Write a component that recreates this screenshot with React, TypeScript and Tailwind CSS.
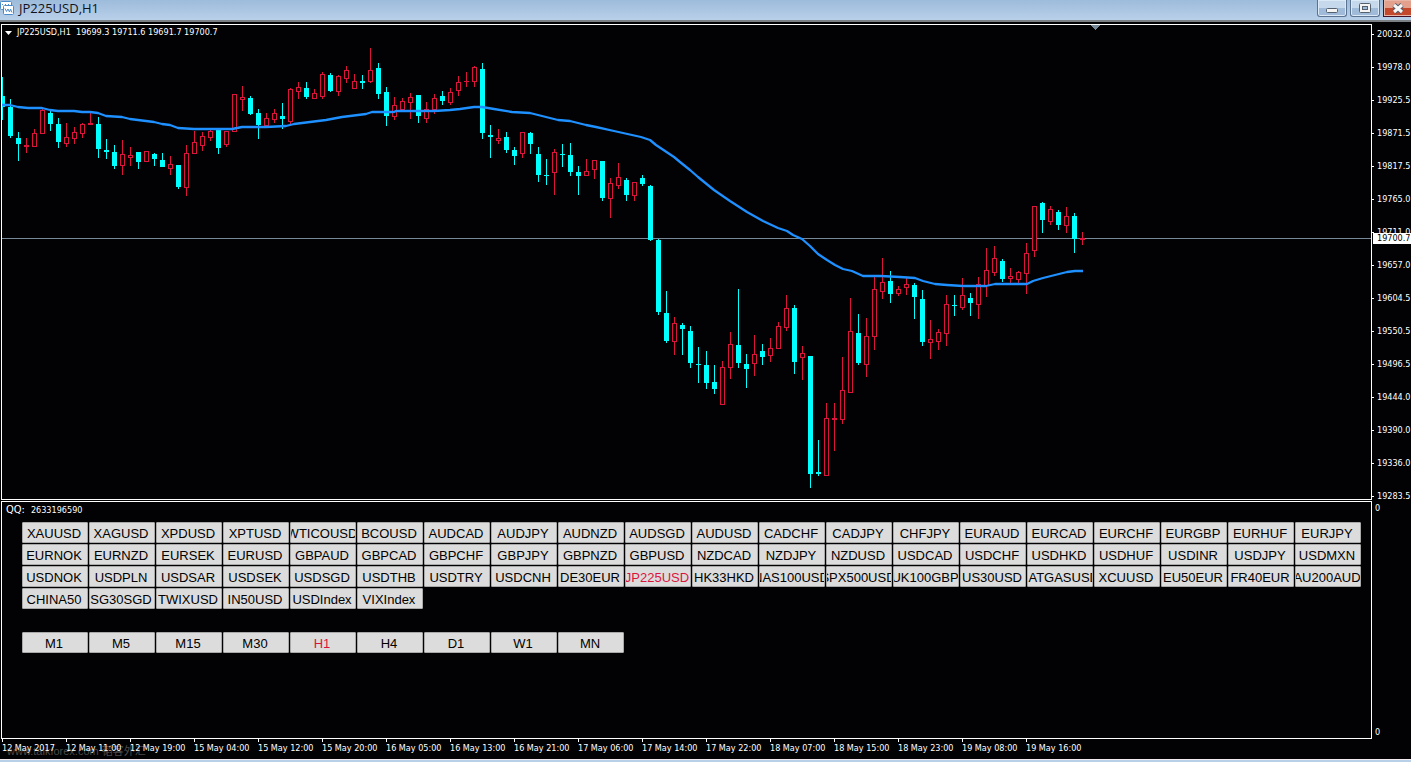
import { clsx } from 'clsx';

// [high, bodyTop, bodyBottom, low, direction] in chart pixels, one candle every 8px
type Candle = [number, number, number, number, 'u' | 'd'];

const candles: Candle[] = [
  [77, 96, 107, 120, 'd'], [99, 107, 136, 138, 'd'], [132, 138, 144, 161, 'd'], [138, 145, 147, 153, 'u'],
  [129, 133, 147, 147, 'u'], [108, 110, 134, 134, 'u'], [109, 113, 124, 131, 'd'], [118, 124, 142, 148, 'd'],
  [123, 137, 144, 147, 'u'], [127, 132, 139, 144, 'u'], [123, 124, 134, 138, 'u'], [112, 123, 125, 125, 'u'],
  [117, 124, 149, 158, 'd'], [139, 150, 152, 159, 'd'], [145, 152, 166, 169, 'd'], [140, 154, 166, 175, 'u'],
  [147, 155, 158, 166, 'u'], [152, 152, 162, 169, 'd'], [151, 151, 162, 162, 'u'], [153, 154, 159, 166, 'd'],
  [153, 160, 167, 167, 'd'], [156, 164, 169, 175, 'u'], [165, 165, 187, 189, 'd'], [145, 153, 188, 196, 'u'],
  [131, 142, 154, 154, 'u'], [132, 136, 146, 151, 'u'], [130, 131, 138, 141, 'u'], [129, 129, 148, 154, 'd'],
  [131, 131, 145, 147, 'u'], [94, 94, 132, 132, 'u'], [86, 97, 100, 111, 'u'], [96, 98, 114, 115, 'd'],
  [109, 113, 125, 139, 'd'], [113, 118, 126, 126, 'u'], [109, 113, 120, 123, 'u'], [103, 116, 119, 129, 'd'],
  [88, 89, 122, 124, 'u'], [82, 87, 92, 99, 'u'], [82, 88, 97, 99, 'd'], [89, 93, 99, 99, 'u'],
  [72, 74, 97, 99, 'u'], [73, 75, 91, 92, 'd'], [75, 76, 92, 96, 'u'], [66, 70, 79, 83, 'u'],
  [74, 81, 89, 89, 'u'], [75, 81, 83, 89, 'd'], [48, 70, 82, 83, 'u'], [63, 68, 94, 99, 'd'],
  [87, 92, 116, 126, 'd'], [97, 105, 117, 120, 'u'], [98, 101, 110, 110, 'u'], [93, 97, 103, 119, 'u'],
  [95, 95, 116, 123, 'd'], [102, 109, 119, 123, 'u'], [94, 98, 110, 114, 'u'], [91, 96, 101, 105, 'd'],
  [88, 92, 103, 105, 'u'], [76, 82, 91, 96, 'u'], [72, 81, 82, 87, 'u'], [66, 67, 82, 87, 'u'],
  [63, 69, 133, 139, 'd'], [125, 135, 137, 158, 'd'], [129, 138, 141, 144, 'u'], [132, 137, 150, 153, 'd'],
  [147, 150, 156, 165, 'd'], [132, 132, 154, 158, 'u'], [132, 133, 144, 154, 'd'], [147, 154, 175, 182, 'd'],
  [159, 175, 176, 185, 'd'], [149, 152, 173, 195, 'u'], [144, 154, 155, 167, 'd'], [143, 155, 172, 176, 'd'],
  [166, 172, 176, 195, 'd'], [159, 171, 176, 176, 'u'], [160, 160, 170, 179, 'u'], [161, 161, 198, 201, 'd'],
  [178, 183, 199, 218, 'u'], [163, 177, 186, 189, 'u'], [178, 180, 195, 201, 'd'], [182, 182, 196, 201, 'u'],
  [175, 178, 184, 186, 'd'], [185, 186, 240, 241, 'd'], [239, 240, 312, 315, 'd'], [291, 313, 341, 343, 'd'],
  [317, 323, 342, 355, 'u'], [323, 325, 329, 355, 'd'], [326, 331, 363, 368, 'd'], [347, 364, 365, 383, 'd'],
  [351, 365, 383, 389, 'd'], [365, 382, 389, 394, 'd'], [361, 367, 405, 405, 'u'], [332, 344, 368, 379, 'u'],
  [289, 345, 363, 368, 'd'], [354, 364, 369, 388, 'd'], [335, 354, 364, 376, 'u'], [344, 351, 357, 365, 'd'],
  [338, 348, 356, 362, 'u'], [322, 326, 349, 349, 'u'], [295, 308, 328, 331, 'u'], [305, 308, 362, 374, 'd'],
  [346, 353, 358, 380, 'u'], [356, 356, 474, 488, 'd'], [440, 472, 474, 476, 'd'], [403, 418, 476, 476, 'u'],
  [403, 418, 420, 451, 'u'], [357, 390, 420, 424, 'u'], [298, 331, 393, 393, 'u'], [314, 333, 363, 365, 'd'],
  [318, 336, 365, 377, 'u'], [277, 289, 337, 350, 'u'], [258, 282, 292, 299, 'u'], [271, 281, 294, 303, 'd'],
  [286, 289, 294, 296, 'u'], [278, 284, 288, 295, 'u'], [283, 285, 297, 319, 'd'], [290, 299, 342, 346, 'd'],
  [320, 339, 343, 359, 'u'], [329, 332, 342, 350, 'u'], [295, 304, 334, 346, 'u'], [295, 305, 306, 316, 'd'],
  [278, 295, 308, 310, 'u'], [293, 298, 303, 316, 'd'], [277, 284, 305, 319, 'u'], [248, 270, 286, 297, 'u'],
  [246, 258, 273, 276, 'u'], [259, 261, 279, 282, 'd'], [268, 276, 279, 283, 'u'], [271, 272, 280, 283, 'u'],
  [243, 253, 274, 294, 'u'], [206, 206, 251, 257, 'u'], [202, 203, 220, 233, 'd'], [206, 209, 222, 225, 'u'],
  [210, 212, 225, 230, 'd'], [207, 216, 226, 233, 'u'], [213, 216, 239, 253, 'd'], [232, 238, 240, 245, 'u'],
];

const average = [
  '2,105 10,105 18,107 28,108 42,108 50,110 58,111 74,111 82,112 90,112 98,113 106,116 122,117 130,119',
  '138,120 154,122 162,124 170,125 178,128 194,129 232,129 242,127 266,127 286,126 294,124 310,122 326,120',
  '342,117 358,115 366,114 372,112 394,112 396,111 434,111 450,110 460,109 474,107 482,107 494,109 512,112',
  '530,113 546,117 558,120 570,121 586,125 596,127 614,131 632,135 641,137 650,140 656,145 668,153 674,157',
  '680,162 690,170 698,177 714,190 730,201 747,212 763,221 778,228 787,231 793,235 802,239 810,246 818,254',
  '827,260 835,265 843,269 852,271 863,276 881,276 900,277 915,278 923,281 935,284 947,285 963,286 986,286',
  '995,284 1027,284 1033,281 1043,278 1055,275 1067,272 1075,271 1083,271',
].join(' ');

const prices = [
  '20032.0', '19978.0', '19925.5', '19871.5', '19817.5', '19765.0', '19711.0', '19657.0',
  '19604.5', '19550.5', '19496.5', '19444.0', '19390.0', '19336.0', '19283.5',
];

const times = [
  '12 May 2017', '12 May 11:00', '12 May 19:00', '15 May 04:00', '15 May 12:00', '15 May 20:00',
  '16 May 05:00', '16 May 13:00', '16 May 21:00', '17 May 06:00', '17 May 14:00', '17 May 22:00',
  '18 May 07:00', '18 May 15:00', '18 May 23:00', '19 May 08:00', '19 May 16:00',
];

const symbols = [
  'XAUUSD', 'XAGUSD', 'XPDUSD', 'XPTUSD', 'WTICOUSD', 'BCOUSD', 'AUDCAD', 'AUDJPY', 'AUDNZD', 'AUDSGD',
  'AUDUSD', 'CADCHF', 'CADJPY', 'CHFJPY', 'EURAUD', 'EURCAD', 'EURCHF', 'EURGBP', 'EURHUF', 'EURJPY',
  'EURNOK', 'EURNZD', 'EURSEK', 'EURUSD', 'GBPAUD', 'GBPCAD', 'GBPCHF', 'GBPJPY', 'GBPNZD', 'GBPUSD',
  'NZDCAD', 'NZDJPY', 'NZDUSD', 'USDCAD', 'USDCHF', 'USDHKD', 'USDHUF', 'USDINR', 'USDJPY', 'USDMXN',
  'USDNOK', 'USDPLN', 'USDSAR', 'USDSEK', 'USDSGD', 'USDTHB', 'USDTRY', 'USDCNH', 'DE30EUR', 'JP225USD',
  'HK33HKD', 'NAS100USD', 'SPX500USD', 'UK100GBP', 'US30USD', 'NATGASUSD', 'XCUUSD', 'EU50EUR', 'FR40EUR', 'AU200AUD',
  'CHINA50', 'SG30SGD', 'TWIXUSD', 'IN50USD', 'USDIndex', 'VIXIndex',
];

const periods = ['M1', 'M5', 'M15', 'M30', 'H1', 'H4', 'D1', 'W1', 'MN'];

function TitleBar() {
  const control =
    'flex h-[17px] w-[30px] items-center justify-center rounded-b-[3px] border border-t-0 border-[#5b7391] bg-linear-to-b from-[#c5d8ec] from-50% to-[#9fbbd9] to-50% shadow-[inset_0_0_0_1px_#dbe8f5]';
  return (
    <header className="flex h-[22px] items-start justify-between overflow-hidden border-b-2 border-[#7c8085] bg-linear-to-b from-[#9dbbdb] to-[#b9d0e9]">
      <div className="flex items-center gap-1">
        <svg width="15" height="16" viewBox="0 0 15 16" fill="#fff" stroke="#4b8cc8">
          <rect x="0.5" y="1.5" width="11" height="8" rx="1" />
          <path d="M2 4.5h1m2 0h1m2 0h1" fill="none" />
          <rect x="3.5" y="5.5" width="10" height="9" rx="1" />
          <path d="M5 8.500l1.500 3L8 9l1.500 3 1-3 1.500 3.500" fill="none" />
        </svg>
        <h1 className="font-['Open_Sans',sans-serif] text-[13px] leading-4 text-[#10131c]">JP225USD,H1</h1>
      </div>
      <div className="-mr-0.5 flex shrink-0 gap-[3px]">
        <button aria-label="Minimize" className={control}>
          <svg width="12" height="14" viewBox="0 0 12 14">
            <rect x="0.5" y="7.5" width="11" height="4" rx="1" fill="#f4f4f4" stroke="#55606e" />
          </svg>
        </button>
        <button aria-label="Restore" className={control}>
          <svg width="12" height="14" viewBox="0 0 12 14">
            <rect x="0.5" y="2.5" width="11" height="9" rx="1" fill="#f4f4f4" stroke="#55606e" />
            <rect x="3.5" y="5.5" width="5" height="3" fill="#9fbbd9" stroke="#55606e" />
          </svg>
        </button>
        <button
          aria-label="Close"
          className="flex h-[17px] w-[30px] items-center justify-center border border-t-0 border-[#43102a] bg-linear-to-b from-[#e3a18d] from-50% to-[#c4492c] to-50% shadow-[inset_0_0_0_1px_#e8b5a6]"
        >
          <svg width="12" height="14" viewBox="0 0 12 14" fill="none">
            <path d="M2 4l8 7M10 4l-8 7" stroke="#555b66" strokeWidth="5" />
            <path d="M2 4l8 7M10 4l-8 7" stroke="#f6f6f6" strokeWidth="3" />
          </svg>
        </button>
      </div>
    </header>
  );
}

function CandleMark({ x, candle }: { x: number; candle: Candle }) {
  const [high, top, bottom, low, dir] = candle;
  const height = bottom - top;
  const color = dir === 'u' ? '#dc143c' : '#00ffff';
  return (
    <g>
      <rect x={x} y={high} width={1} height={low - high} fill={color} />
      <rect x={x - 2} y={top} width={5} height={height} fill={color} />
      {dir === 'u' && height > 2 && <rect x={x - 1} y={top + 1} width={3} height={height - 2} fill="#020103" />}
    </g>
  );
}

function PriceChart() {
  return (
    <div className="relative min-w-0 flex-1 overflow-hidden border border-white">
      <svg className="block h-[474px] w-full" shapeRendering="crispEdges" role="img" aria-label="JP225USD H1 price">
        <rect x="0" y="213" width="100%" height="1" fill="#778899" />
        {/* chart data is kept in window coordinates */}
        <g transform="translate(-2 -25)">
          {candles.map((candle, i) => (
            <CandleMark key={i} x={2 + i * 8} candle={candle} />
          ))}
          <polyline
            points={average}
            fill="none"
            stroke="#1e90ff"
            strokeWidth="2.3"
            strokeLinejoin="round"
            shapeRendering="geometricPrecision"
          />
          <path d="M1091 25h9l-4.500 5z" fill="#778899" />
        </g>
      </svg>
      <p className="absolute top-0.5 left-[3px] flex items-center gap-[5px] leading-[11px] whitespace-pre">
        <svg width="7" height="4" viewBox="0 0 7 4" fill="#fff">
          <path d="M0 0h7L3.500 4z" />
        </svg>
        {'JP225USD,H1  19699.3 19711.6 19691.7 19700.7'}
      </p>
    </div>
  );
}

function PriceScale() {
  return (
    <div className="relative w-[39px] shrink-0">
      <ul className="flex flex-col gap-6 overflow-hidden pt-1.5 leading-[9px]">
        {prices.map((price) => (
          <li key={price} className="flex items-center gap-[3px]">
            <span className="h-px w-0.5 bg-white" />
            {price}
          </li>
        ))}
      </ul>
      <span className="absolute top-[209px] right-0 left-px bg-white pl-1 leading-[11px] text-black">19700.7</span>
    </div>
  );
}

function PanelButton({ label, active }: { label: string; active: boolean }) {
  return (
    <button
      className={clsx(
        'flex h-[21px] items-center justify-center overflow-hidden rounded-[1px] border border-[#a9a9a9] bg-[#dcdcdc] pt-0.5 pr-0.5 text-[13px]',
        active ? 'text-[#dc143c]' : 'text-black',
      )}
    >
      <span className="whitespace-nowrap">{label}</span>
    </button>
  );
}

function SymbolPanel() {
  const grid =
    "grid grid-cols-[repeat(20,minmax(0,1fr))] gap-px pr-2.5 pl-5 font-['Liberation_Sans',Arial,sans-serif]";
  return (
    <div className="min-w-0 flex-1 border border-white">
      <p className="flex h-5 items-start gap-1.5 pl-1 leading-4">
        <span className="text-[11px]">QQ:</span>2633196590
      </p>
      <div className={grid}>
        {symbols.map((symbol) => (
          <PanelButton key={symbol} label={symbol} active={symbol === 'JP225USD'} />
        ))}
      </div>
      <div className={clsx(grid, 'mt-[23px]')}>
        {periods.map((period) => (
          <PanelButton key={period} label={period} active={period === 'H1'} />
        ))}
      </div>
    </div>
  );
}

function TimeScale() {
  return (
    <footer className="relative h-5 overflow-hidden">
      <span className="absolute bottom-0.5 left-1.5 font-['Liberation_Sans','Noto_Sans_CJK_SC',sans-serif] text-[11px] leading-3 text-[#4a4a4a]">
        www.talkforex.com 韬客外汇
      </span>
      <ol className="relative flex pl-px">
        {times.map((time) => (
          <li key={time} className="w-16 shrink-0 whitespace-nowrap">
            <span className="block h-[3px] w-px bg-white" />
            <span className="block leading-3">{time}</span>
          </li>
        ))}
      </ol>
    </footer>
  );
}

export default function App() {
  return (
    <div className="flex min-h-screen flex-col bg-[#020103] font-['DejaVu_Sans_Condensed','Noto_Sans',sans-serif] text-[9px] text-white">
      <TitleBar />
      <main className="flex flex-1 flex-col pt-0.5 pl-px">
        <section className="flex">
          <div className="flex min-w-0 flex-1 pb-px">
            <PriceChart />
          </div>
          <PriceScale />
        </section>
        <section className="flex flex-1">
          <SymbolPanel />
          <div className="flex w-[39px] shrink-0 flex-col justify-between pt-0.5 pb-px leading-[11px]">
            <span className="pl-[3px]">0</span>
            <span className="pl-[3px]">0</span>
          </div>
        </section>
        <TimeScale />
      </main>
      <div className="h-[3px] border-t border-[#f3e9ee] bg-[#b9d0e9]" />
    </div>
  );
}
